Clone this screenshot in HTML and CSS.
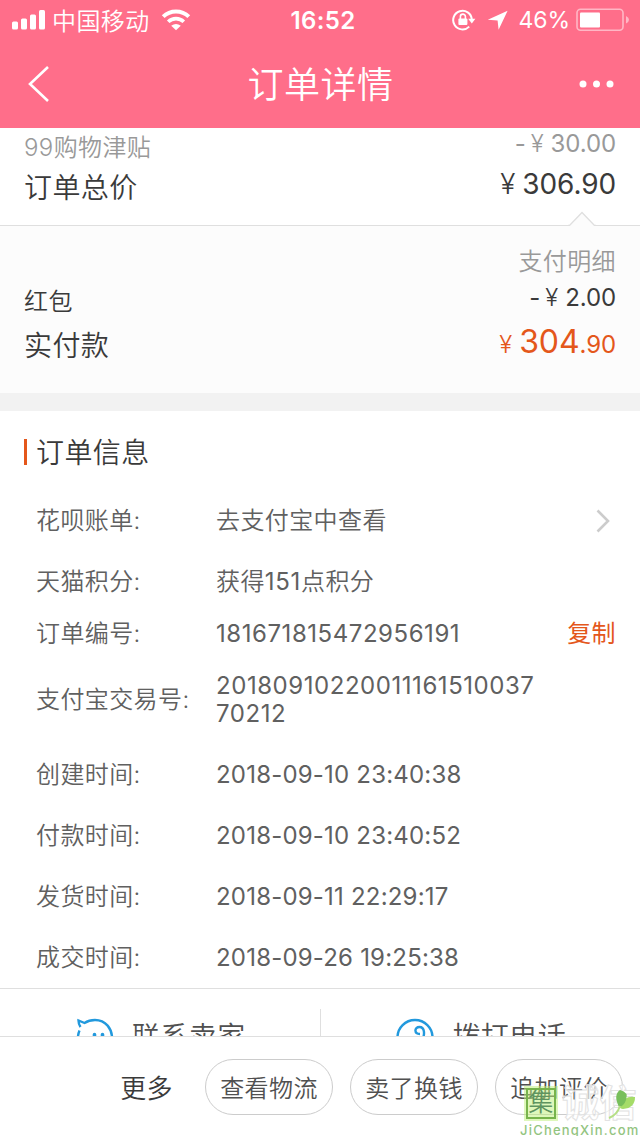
FILE: index.html
```html
<!DOCTYPE html>
<html lang="zh-CN">
<head>
    <meta charset="UTF-8">
    <meta name="viewport" content="width=device-width, initial-scale=1.0">
    <title>订单详情</title>
    <link rel="stylesheet" href="styles.css">
</head>
<body>

    <!-- Header -->
    <header class="header">
        <div class="status-bar">
            <div class="status-left">
                <svg class="signal" width="34" height="20" viewBox="0 0 34 20" fill="#fff">
                    <rect x="0" y="11.5" width="6" height="8" rx="1.5"/>
                    <rect x="9" y="8.5" width="6" height="11" rx="1.5"/>
                    <rect x="18" y="4.5" width="6" height="15" rx="1.5"/>
                    <rect x="27" y="0" width="6" height="19.5" rx="1.5"/>
                </svg>
                <span class="carrier">中国移动</span>
                <svg class="wifi" width="30" height="22" viewBox="0 0 30 22">
                    <path d="M2.2 7.6A18.3 18.3 0 0 1 27.8 7.6" fill="none" stroke="#fff" stroke-width="4"/>
                    <path d="M7.2 12.8A11.2 11.2 0 0 1 22.8 12.8" fill="none" stroke="#fff" stroke-width="3.6"/>
                    <path d="M15 21.3L10.2 16.8Q15 13 19.8 16.8Z" fill="#fff"/>
                </svg>
            </div>
            <div class="clock">16:52</div>
            <div class="status-right">
                <svg width="24" height="22" viewBox="0 0 24 22">
                    <path d="M17.2 17.6A9.3 9.3 0 1 1 19.8 10.5" fill="none" stroke="#fff" stroke-width="2"/>
                    <path d="M16.2 9.8H23.4L19.8 14.4Z" fill="#fff"/>
                    <rect x="6.4" y="9.4" width="9" height="6.6" rx="1" fill="#fff"/>
                    <path d="M8.4 10V7.6A2.5 2.5 0 0 1 13.4 7.6V10" fill="none" stroke="#fff" stroke-width="1.6"/>
                </svg>
                <svg class="location" width="21" height="21" viewBox="0 0 21 21">
                    <path d="M20.6 .8L11.6 19.8L10.6 10.6L.8 9.8Z" fill="#fff"/>
                </svg>
                <span class="percent">46%</span>
                <svg class="battery" width="53" height="24" viewBox="0 0 53 24">
                    <rect x="1" y="1.2" width="46" height="21" rx="3.5" fill="none" stroke="#fff" stroke-opacity=".5" stroke-width="1.6"/>
                    <rect x="4" y="4.5" width="20" height="15" rx="1" fill="#fff"/>
                    <path d="M50 8Q53 9.5 53 11.8T50 15.6Z" fill="#fff" opacity=".5"/>
                </svg>
            </div>
        </div>
        <div class="nav-bar">
            <svg class="back" width="22" height="36" viewBox="0 0 22 36">
                <path d="M20 1L2 18L20 35" fill="none" stroke="#fff" stroke-width="2.6"/>
            </svg>
            <h1 class="title">订单详情</h1>
            <svg class="dots" width="35" height="8" viewBox="0 0 35 8" fill="#fff">
                <circle cx="4" cy="4" r="3.5"/>
                <circle cx="17.5" cy="4" r="3.5"/>
                <circle cx="31" cy="4" r="3.5"/>
            </svg>
        </div>
    </header>

    <main class="content">
        <!-- Order total -->
        <section class="total">
            <div class="line line-discount">
                <span class="label">99购物津贴</span>
                <span class="amount">-<i class="yen">¥</i>30.00</span>
            </div>
            <div class="line line-total">
                <span class="label">订单总价</span>
                <span class="amount"><i class="yen">¥</i>306.90</span>
            </div>
        </section>

        <!-- Payment detail -->
        <section class="payment">
            <svg class="notch" width="28" height="15" viewBox="0 0 28 15">
                <path d="M0 14.5H1.5L14 1.5L26.5 14.5H28V15H0Z" fill="#fcfcfc"/>
                <path d="M0 14.5H1.5L14 1.5L26.5 14.5H28" fill="none" stroke="#dfdfdf" stroke-width="1.3"/>
            </svg>
            <div class="line line-caption"><span>支付明细</span></div>
            <div class="line line-packet">
                <span class="label">红包</span>
                <span class="amount">-<i class="yen">¥</i>2.00</span>
            </div>
            <div class="line line-paid">
                <span class="label">实付款</span>
                <span class="amount"><i class="yen">¥</i><b>304</b>.90</span>
            </div>
        </section>

        <!-- Order info -->
        <section class="info">
            <h2 class="info-title">订单信息</h2>
            <div class="row">
                <span class="key">花呗账单:</span>
                <span class="value">去支付宝中查看</span>
                <svg class="arrow" width="14" height="24" viewBox="0 0 14 24">
                    <path d="M1.5 1.5L12 12L1.5 22.5" fill="none" stroke="#ccc" stroke-width="2.6"/>
                </svg>
            </div>
            <div class="row">
                <span class="key">天猫积分:</span>
                <span class="value">获得<span class="points">151</span>点积分</span>
            </div>
            <div class="row row-short">
                <span class="key">订单编号:</span>
                <span class="value number">181671815472956191</span>
                <span class="copy">复制</span>
            </div>
            <div class="row row-tall">
                <span class="key">支付宝交易号:</span>
                <span class="value number">20180910220011161510037<br>70212</span>
            </div>
            <div class="row">
                <span class="key">创建时间:</span>
                <span class="value time">2018-09-10 23:40:38</span>
            </div>
            <div class="row">
                <span class="key">付款时间:</span>
                <span class="value time">2018-09-10 23:40:52</span>
            </div>
            <div class="row">
                <span class="key">发货时间:</span>
                <span class="value time">2018-09-11 22:29:17</span>
            </div>
            <div class="row">
                <span class="key">成交时间:</span>
                <span class="value time">2018-09-26 19:25:38</span>
            </div>
        </section>

        <!-- Contact buttons, cut off by the bottom bar -->
        <section class="contact">
            <div class="contact-item">
                <svg width="38" height="38" viewBox="0 0 38 38" fill="none" stroke="#2299dd" stroke-width="2.4">
                    <path d="M3.5 12.5Q1.5 17 2 23A17 15 0 0 0 36 23C37 10 29 2 19 2Q13 2 8.5 5L2.5 2.5Q2.5 6 4.5 9"/>
                    <path d="M18.5 16.5V20M26.5 16.5V20" stroke-width="3.6" stroke-linecap="round"/>
                </svg>
                <span>联系卖家</span>
            </div>
            <div class="contact-item">
                <svg width="38" height="38" viewBox="0 0 38 38" fill="none" stroke="#2299dd" stroke-width="2.4">
                    <circle cx="19" cy="19.5" r="17.5"/>
                    <path d="M24 16C18 16 18 9 23.5 9C29 9 29 17 26 22C20 29 10 29 10 25C10 21 15 21 17 24"/>
                </svg>
                <span>拨打电话</span>
            </div>
        </section>
    </main>

    <!-- Bottom bar -->
    <footer class="footer">
        <span class="more">更多</span>
        <button class="pill">查看物流</button>
        <button class="pill">卖了换钱</button>
        <button class="pill">追加评价</button>
    </footer>

    <!-- Site mark over the bottom right corner -->
    <div class="mark">
        <div class="mark-top">
            <span class="mark-seal">集</span>
            <span class="mark-name">诚信</span>
        </div>
        <div class="mark-url">JiChengXin.com</div>
        <svg class="mark-leaf" width="30" height="32" viewBox="0 0 30 32">
            <path d="M11 17Q17 6 27 8Q27 19 15 20Q12 20 11 17Z" fill="#a5dc68"/>
            <path d="M11 18Q5 6 12 1Q21 3 18 11Q16 17 11 18Z" fill="#78bf5c"/>
            <path d="M12 17Q9 26 1 29" fill="none" stroke="#b5df85" stroke-width="2"/>
        </svg>
    </div>

</body>
</html>
```
FILE: styles.css
```css
* {
    box-sizing: border-box;
}
body {
    margin: 0;
    width: 640px;
    height: 1136px;
    overflow: hidden;
    position: relative;
    display: flex;
    flex-direction: column;
    background: #fff;
    color: #3a3a3a;
    font-family: Inter, "Noto Sans CJK SC", sans-serif;
    font-size: 24px;
    font-weight: 350;
    letter-spacing: 0.4px;
}
h1, h2 {
    margin: 0;
    font-weight: 350;
}

/* header */
.header {
    height: 128px;
    flex: none;
    background: #ff6e8a;
    color: #fff;
}
.status-bar {
    height: 40px;
    display: grid;
    grid-template-columns: 1fr auto 1fr;
    align-items: center;
    padding: 0 11px 0 12px;
}
.status-left, .status-right {
    display: flex;
    align-items: center;
}
.status-right {
    justify-content: flex-end;
}
.carrier {
    margin: -2px 11px 0 6px;
}
.clock {
    font-size: 24px;
    font-weight: 600;
    padding-left: 5px;
}
.location {
    margin: 0 11px 0 11px;
}
.percent {
    font-size: 23px;
    font-weight: 400;
    letter-spacing: -0.1px;
    margin-right: 6px;
}
.nav-bar {
    height: 88px;
    display: flex;
    align-items: center;
    justify-content: space-between;
    padding: 0 26px 0 28px;
}
.title {
    font-size: 36px;
    letter-spacing: 0.5px;
    padding: 0 0 4px 12px;
}

.content {
    flex: 1;
    min-height: 0;
    overflow: hidden;
}

/* prices */
.line {
    display: flex;
    justify-content: space-between;
    align-items: center;
    padding: 0 24px;
}
.amount {
    font-weight: 400;
    letter-spacing: -0.1px;
    padding-bottom: 4px;
}
.yen {
    font-style: normal;
    font-weight: 350;
    margin: 0 7px 0 5px;
}
.total {
    height: 97px;
}
.line-discount {
    height: 34px;
    color: #999;
}
.line-total {
    height: 48px;
    font-size: 28px;
}
.payment {
    position: relative;
    height: 168px;
    background: #fcfcfc;
    border-top: 1px solid #dfdfdf;
}
.notch {
    position: absolute;
    right: 44px;
    top: -15px;
}
.line-caption {
    height: 33px;
    margin-top: 17px;
    justify-content: flex-end;
    color: #999;
}
.line-packet {
    height: 46px;
}
.line-packet .amount {
    padding-bottom: 3px;
}
.line-paid {
    height: 43px;
    font-size: 28px;
}
.line-paid .amount {
    color: #e4571b;
    font-size: 24px;
    padding-bottom: 5px;
}
.line-paid b {
    font-size: 32px;
    font-weight: 400;
}

/* order info */
.info {
    border-top: 18px solid #f2f2f2;
    border-bottom: 1px solid #dfdfdf;
    height: 596px;
    padding: 28px 24px 0 24px;
}
.info-title {
    height: 26px;
    line-height: 29px;
    border-left: 3px solid #e4571b;
    padding-left: 9px;
    margin-bottom: 25px;
    font-size: 28px;
}
.row {
    display: flex;
    align-items: center;
    height: 61px;
    padding-left: 12px;
    line-height: 28px;
    color: #606060;
}
.row-short {
    height: 43px;
}
.row-tall {
    height: 89px;
}
.key {
    width: 180px;
}
.number {
    font-weight: 400;
    letter-spacing: 0.55px;
}
.time {
    font-weight: 400;
    letter-spacing: 0.2px;
}
.points {
    font-weight: 400;
    letter-spacing: 0.7px;
}
.arrow {
    margin: 0 6px 0 auto;
}
.copy {
    margin-left: auto;
    font-weight: 400;
    color: #e4571b;
}

/* contact */
.contact {
    display: flex;
    padding-top: 20px;
}
.contact-item {
    flex: 1;
    height: 56px;
    display: flex;
    justify-content: center;
    align-items: center;
    gap: 18px;
    padding-left: 2px;
    font-size: 28px;
    color: #505050;
}
.contact-item span {
    padding-bottom: 4px;
}
.contact-item + .contact-item {
    border-left: 1px solid #dfdfdf;
}

/* bottom bar */
.footer {
    height: 100px;
    flex: none;
    border-top: 1px solid #dfdfdf;
    display: flex;
    align-items: center;
    justify-content: flex-end;
    gap: 17px;
    padding-right: 17px;
    background: #fff;
}
.more {
    font-size: 26px;
    margin-right: 15px;
}
.pill {
    width: 128px;
    height: 56px;
    padding: 0 0 1px;
    border: 1px solid #ccc;
    border-radius: 28px;
    background: #fff;
    color: #505050;
    font: inherit;
    letter-spacing: inherit;
}

/* site mark */
.mark {
    position: absolute;
    left: 520px;
    top: 1088px;
    width: 120px;
}
.mark-top {
    display: flex;
    gap: 6px;
    padding-left: 6px;
}
.mark-seal {
    width: 30px;
    height: 31px;
    border: 2px solid #78b44c;
    outline: 2px solid rgba(190, 240, 120, 0.5);
    background: rgba(190, 240, 120, 0.5);
    color: #5f9460;
    font-size: 25px;
    line-height: 25px;
    text-align: center;
}
.mark-name {
    font-size: 37px;
    font-weight: 700;
    line-height: 31px;
    color: rgba(255, 255, 255, 0.7);
    -webkit-text-stroke: 1px #e2e2e2;
}
.mark-url {
    margin-top: 4px;
    font-size: 13px;
    font-weight: 500;
    line-height: 14px;
    letter-spacing: 1.2px;
    white-space: nowrap;
    color: #93c47f;
}
.mark-leaf {
    position: absolute;
    left: 88px;
    top: 1px;
}
```
